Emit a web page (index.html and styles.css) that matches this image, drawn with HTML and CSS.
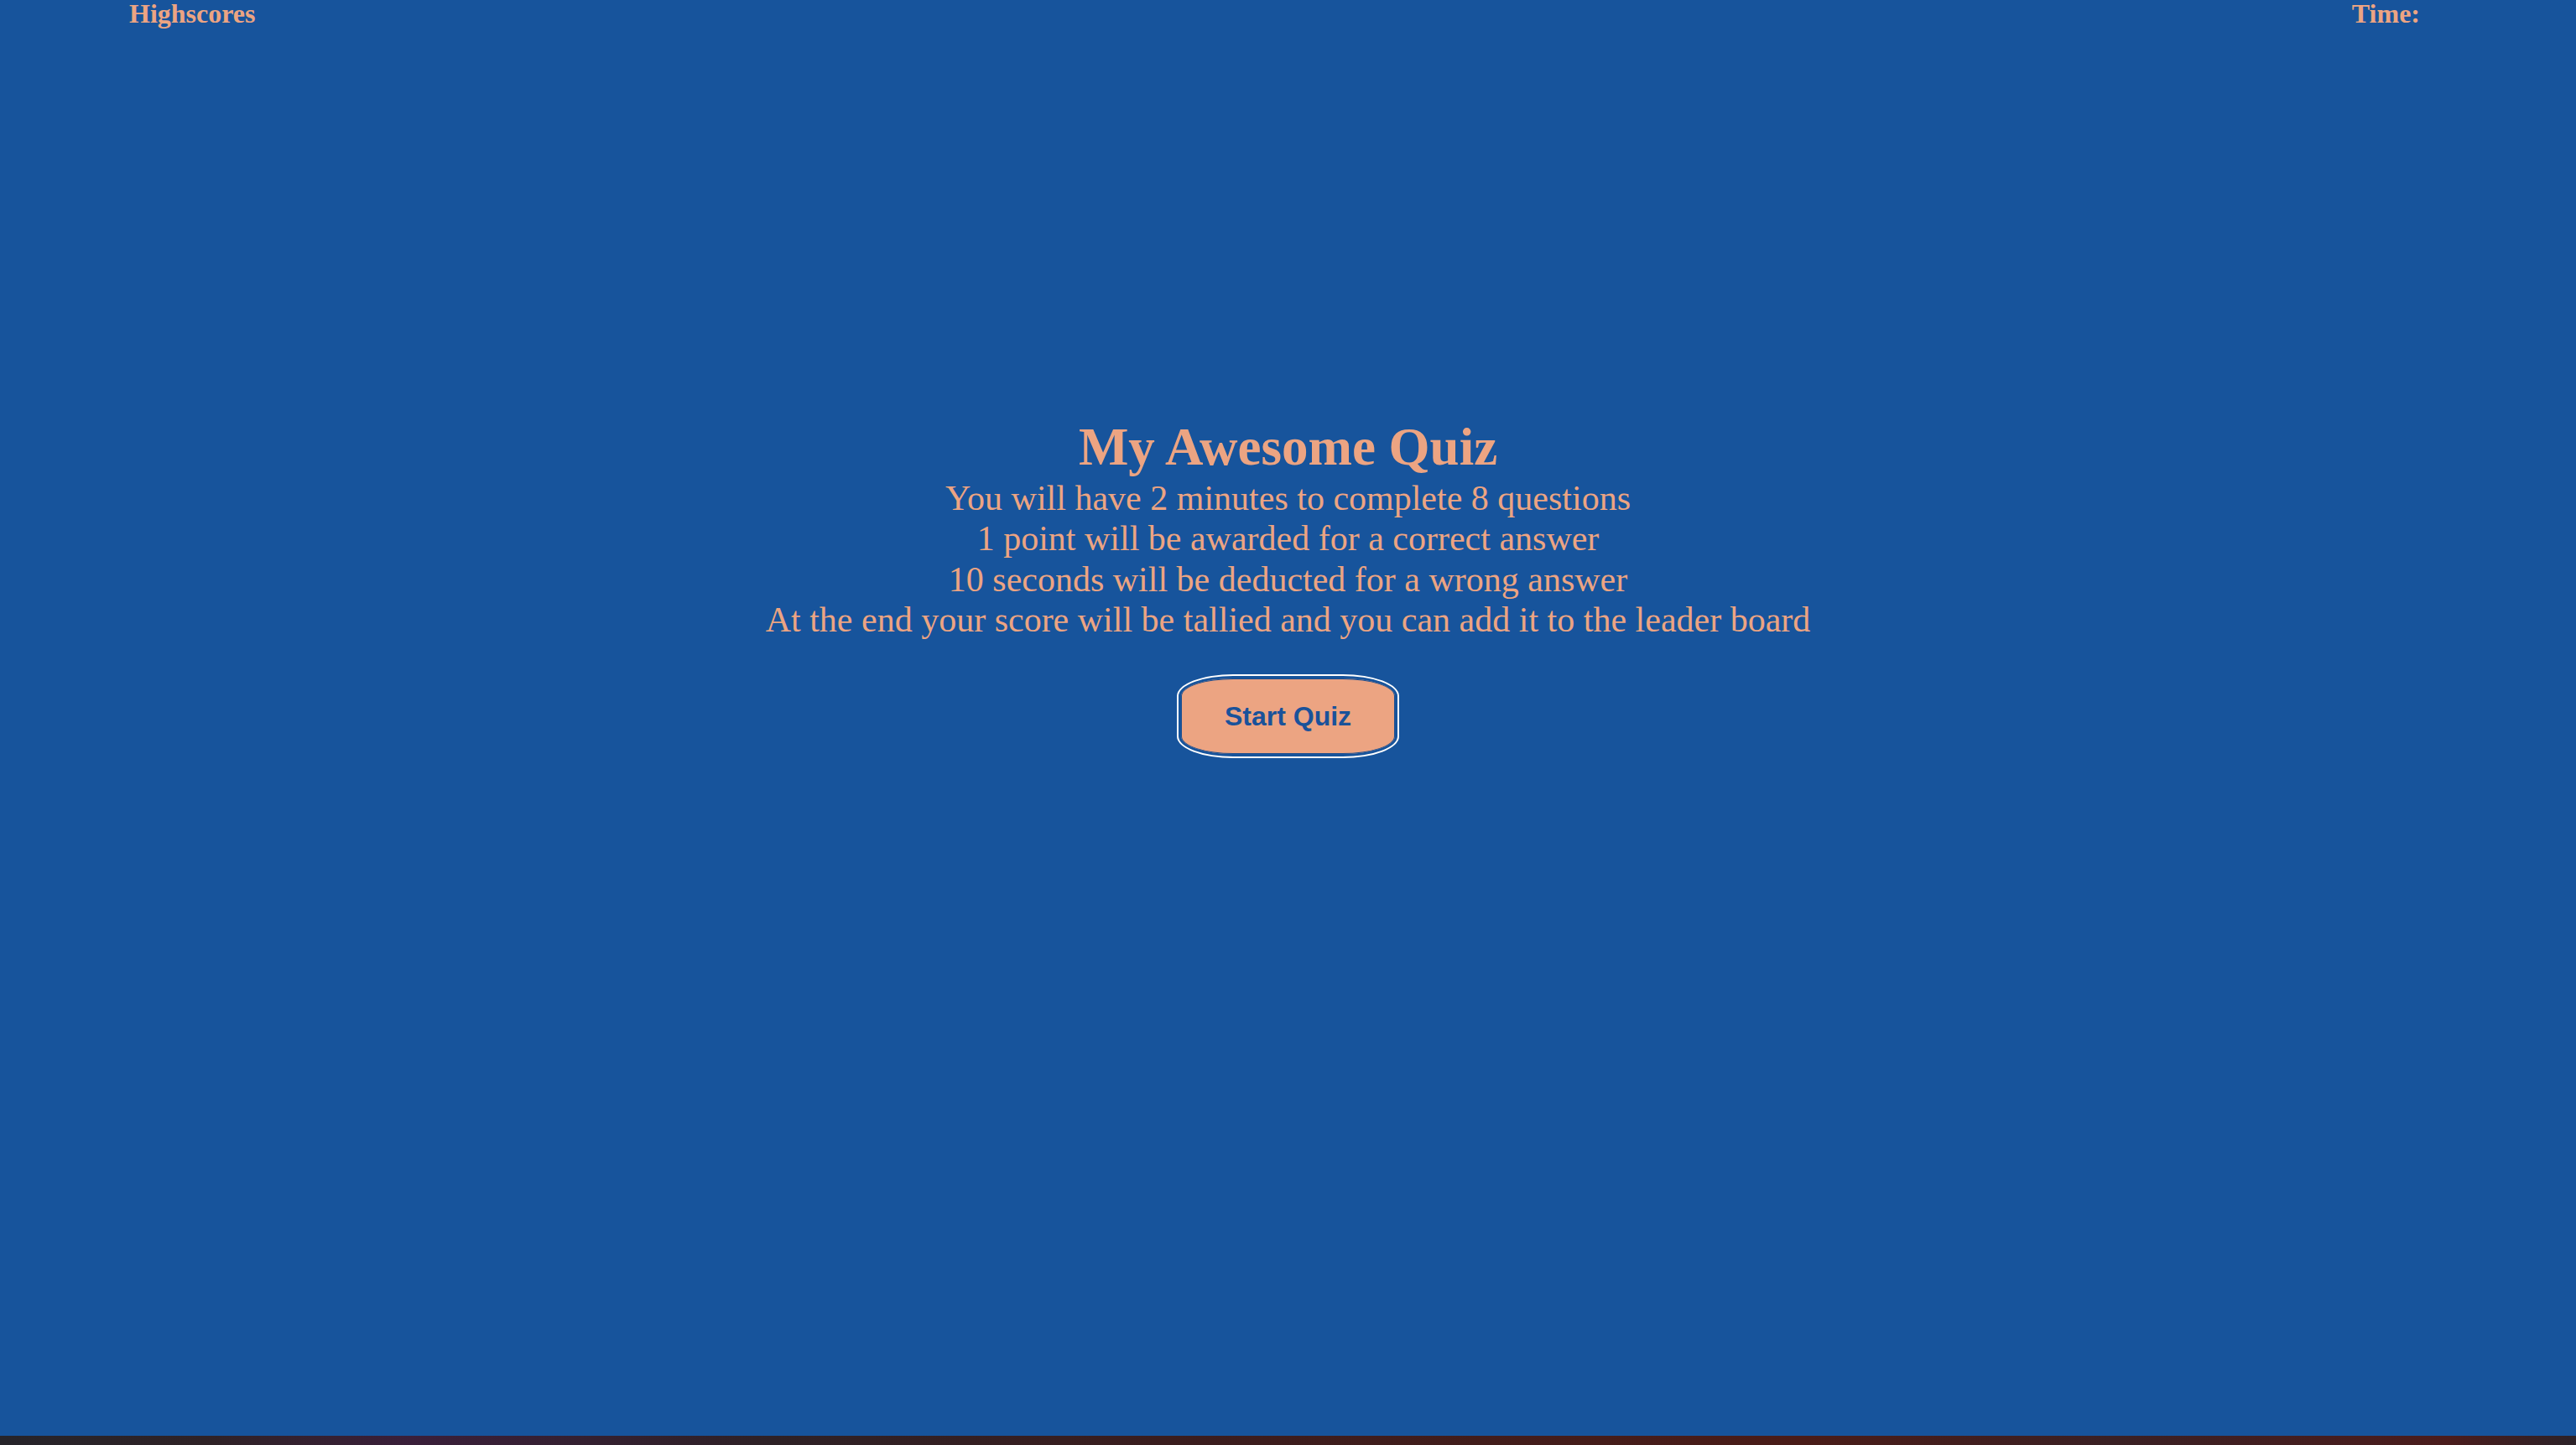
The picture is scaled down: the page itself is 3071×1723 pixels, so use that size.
FILE: index.html
```html
<!DOCTYPE html>
<html lang="en">
<head>
<meta charset="utf-8">
<title>My Awesome Quiz</title>
<link rel="stylesheet" href="styles.css">
</head>
<body>
<div class="page">
  <header class="topbar">
    <a class="highscores">Highscores</a>
    <div class="timer">Time: <span class="time-value"></span></div>
  </header>
  <main class="intro">
    <h1 class="title">My Awesome Quiz</h1>
    <p class="rule">You will have 2 minutes to complete 8 questions</p>
    <p class="rule">1 point will be awarded for a correct answer</p>
    <p class="rule">10 seconds will be deducted for a wrong answer</p>
    <p class="rule">At the end your score will be tallied and you can add it to the leader board</p>
    <button class="start">Start Quiz</button>
  </main>
</div>
<div class="taskbar"></div>
</body>
</html>
```
FILE: styles.css
```css
html, body {
  margin: 0;
  padding: 0;
  height: 100%;
}
body {
  display: flex;
  flex-direction: column;
  background: #17549c;
  font-family: "Liberation Serif", "Times New Roman", serif;
  color: #eca482;
  font-size: 32px;
}
.page {
  flex: 1;
  display: flex;
  flex-direction: column;
}
.topbar {
  display: flex;
  justify-content: space-between;
  padding: 0 178px 0 154px;
  font-weight: bold;
  line-height: 32px;
}
.highscores {
  color: #eca482;
}
.time-value {
  display: inline-block;
}
.intro {
  display: flex;
  flex-direction: column;
  align-items: center;
  text-align: center;
  padding-top: 465px;
}
.title {
  margin: 0;
  font-size: 63px;
  font-weight: bold;
  line-height: normal;
}
.rule {
  margin: 0;
  font-size: 42px;
  line-height: 48.3px;
}
.start {
  margin-top: 43px;
  width: 261px;
  height: 96px;
  background: #eca482;
  color: #1a529a;
  font-family: "Liberation Sans", Arial, sans-serif;
  font-weight: bold;
  font-size: 32px;
  border: 3px solid #17549c;
  border-radius: 25%;
  box-shadow: 0 0 0 1px #1f4f8e inset, 0 0 0 2px #ffffff;
  padding: 0;
  cursor: pointer;
}
.taskbar {
  height: 11px;
  flex: none;
  background: linear-gradient(90deg, #26242a 0%, #2f2226 8%, #3a1f3a 16%, #2e2126 30%, #3a1d1e 45%, #4a1c18 70%, #3a2024 82%, #4b1c1c 95%, #2c2228 100%);
}
```
